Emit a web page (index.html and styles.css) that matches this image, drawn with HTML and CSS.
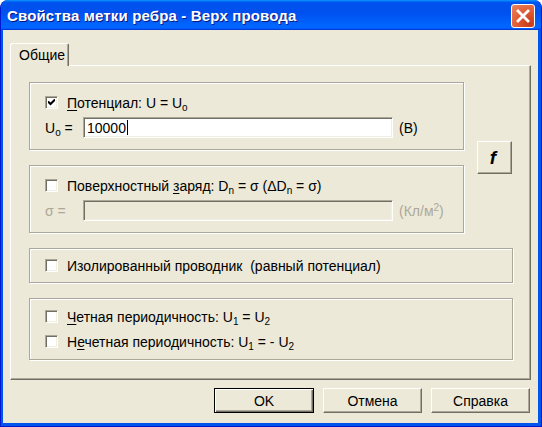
FILE: index.html
```html
<!DOCTYPE html>
<html>
<head>
<meta charset="utf-8">
<link rel="stylesheet" href="styles.css">
</head>
<body>
<div class="window">
  <div class="titlebar">
    <span class="title">Свойства метки ребра - Верх провода</span>
    <div class="close">
      <svg width="16" height="16" viewBox="0 0 16 16"><path d="M3 3 L13 13 M13 3 L3 13" stroke="#fff" stroke-width="2.8" stroke-linecap="square"/></svg>
    </div>
  </div>
  <div class="client">
    <div class="tabs"><div class="tab">Общие</div></div>
    <div class="panel">
      <div class="top">
        <div class="groups">
          <div class="group g1">
            <div class="check"><span class="box"><svg width="7" height="7" viewBox="0 0 7 7"><path d="M0 2.5 L2.5 5 L7 0.5" fill="none" stroke="#000" stroke-width="2"/></svg></span><span><u>П</u>отенциал: U = U<sub>o</sub></span></div>
            <div class="field"><span class="flabel">U<sub>o</sub> =</span><div class="input">10000<span class="caret"></span></div><span class="unit">(В)</span></div>
          </div>
          <div class="group g2">
            <div class="check"><span class="box"></span><span>Поверхностный <u>з</u>аряд: D<sub>n</sub> = σ (ΔD<sub>n</sub> = σ)</span></div>
            <div class="field disabled"><span class="flabel">σ =</span><div class="input"></div><span class="unit">(Кл/м<sup>2</sup>)</span></div>
          </div>
        </div>
        <div class="fbtn">f</div>
      </div>
      <div class="group g3">
        <div class="check"><span class="box"></span><span>Изолированный проводник &nbsp;(равный потенциал)</span></div>
      </div>
      <div class="group g4">
        <div class="check"><span class="box"></span><span><u>Ч</u>етная периодичность: U<sub>1</sub> = U<sub>2</sub></span></div>
        <div class="check"><span class="box"></span><span>Н<u>е</u>четная периодичность: U<sub>1</sub> = - U<sub>2</sub></span></div>
      </div>
    </div>
    <div class="buttons">
      <div class="btn default">OK</div>
      <div class="btn">Отмена</div>
      <div class="btn">Справка</div>
    </div>
  </div>
</div>
</body>
</html>
```
FILE: styles.css
```css
html, body {
  margin: 0;
  padding: 0;
  background: #ffffff;
}
.window {
  width: 542px;
  height: 427px;
  box-sizing: border-box;
  display: flex;
  flex-direction: column;
  background: #0055ea;
  border: 1px solid #0019cf;
  border-top: none;
  border-radius: 8px 8px 0 0;
  overflow: hidden;
  font-family: "Liberation Sans", Arial, sans-serif;
  font-size: 14px;
  color: #000;
}
.titlebar {
  height: 30px;
  flex: none;
  display: flex;
  align-items: center;
  justify-content: space-between;
  padding: 0 6px 0 6px;
  background: linear-gradient(180deg, #0997ff, #0053ee 8%, #0050ee 40%, #06f 88%, #06f 93%, #005bff 95%, #003dd7 96%, #003dd7);
}
.title {
  color: #fff;
  font-weight: bold;
  font-size: 15px;
  letter-spacing: 0.15px;
  text-shadow: 1px 1px #0a1883;
  padding-top: 1px;
}
.close {
  width: 22px;
  height: 22px;
  border: 1px solid #fff;
  border-radius: 3px;
  background: radial-gradient(circle at 80% 85%, #c43c1a 0%, #e0582f 45%, #ec8463 100%);
  display: flex;
  align-items: center;
  justify-content: center;
  margin-top: 1px;
}
.client {
  flex: 1;
  background: #ece9d8;
  margin: 0 3px 3px 2px;
  padding: 13px 7px 10px 7px;
  display: flex;
  flex-direction: column;
}
.tabs {
  display: flex;
  height: 22px;
}
.tab {
  position: relative;
  z-index: 1;
  width: 59px;
  height: 23px;
  box-sizing: border-box;
  padding: 3px 0 0 8px;
  background: #ece9d8;
  border-top: 1px solid #fff;
  border-left: 1px solid #fff;
  border-right: 1px solid #716f64;
  box-shadow: inset -1px 0 #aca899;
  border-radius: 3px 2px 0 0;
}
.panel {
  height: 315px;
  box-sizing: border-box;
  border: 1px solid;
  border-color: #fff #716f64 #716f64 #fff;
  box-shadow: inset -1px -1px #aca899;
  padding: 16px 17px 0 18px;
  display: flex;
  flex-direction: column;
  gap: 15px;
}
.top {
  display: flex;
  align-items: center;
  gap: 13px;
}
.groups {
  width: 435px;
  display: flex;
  flex-direction: column;
  gap: 15px;
}
.group {
  box-sizing: border-box;
  border: 1px solid #aca899;
  box-shadow: inset 1px 1px #fff, 1px 1px #fff;
  padding: 0 14px 0 15px;
  display: flex;
  flex-direction: column;
  justify-content: center;
}
.g1, .g2 { height: 68px; gap: 6px; }
.g3 { height: 35px; }
.g4 { height: 62px; gap: 8px; }
.check {
  display: flex;
  align-items: center;
  height: 17px;
  gap: 9px;
  white-space: nowrap;
}
.box {
  width: 13px;
  height: 13px;
  box-sizing: border-box;
  flex: none;
  background: #fff;
  border: 1px solid;
  border-color: #aca899 #fff #fff #aca899;
  box-shadow: inset 1px 1px #716f64, inset -1px -1px #f1efe2;
  display: flex;
  align-items: center;
  justify-content: center;
}
sub, sup {
  font-size: 10px;
  line-height: 0;
}
sub { vertical-align: -3px; }
sup { vertical-align: 5px; }
u { text-decoration-thickness: 1px; text-underline-offset: 2px; }
.field {
  display: flex;
  align-items: center;
  white-space: nowrap;
}
.flabel { width: 38px; }
.input {
  width: 310px;
  height: 21px;
  box-sizing: border-box;
  border: 1px solid;
  border-color: #aca899 #fff #fff #aca899;
  box-shadow: inset 1px 1px #716f64, inset -1px -1px #f1efe2;
  background: #fff;
  padding: 0 3px;
  display: flex;
  align-items: center;
}
.caret {
  width: 1px;
  height: 15px;
  background: #000;
  margin-left: 1px;
}
.unit { margin-left: 6px; }
.disabled { color: #aca899; }
.disabled .input { background: #ece9d8; }
.fbtn {
  width: 35px;
  height: 33px;
  box-sizing: border-box;
  border: 1px solid;
  border-color: #fff #716f64 #716f64 #fff;
  box-shadow: inset -1px -1px #aca899;
  display: flex;
  align-items: center;
  justify-content: center;
  font-weight: bold;
  font-style: italic;
  font-size: 19px;
  padding-right: 3px;
}
.buttons {
  margin-top: 8px;
  display: flex;
  justify-content: flex-end;
  gap: 9px;
  padding-right: 1px;
}
.btn {
  width: 99px;
  height: 25px;
  box-sizing: border-box;
  border: 1px solid;
  border-color: #fff #716f64 #716f64 #fff;
  box-shadow: inset -1px -1px #aca899;
  display: flex;
  align-items: center;
  justify-content: center;
}
.btn.default {
  width: 100px;
  border: 1px solid #000;
  box-shadow: inset 1px 1px #fff, inset -1px -1px #716f64, inset -2px -2px #aca899;
}
```
